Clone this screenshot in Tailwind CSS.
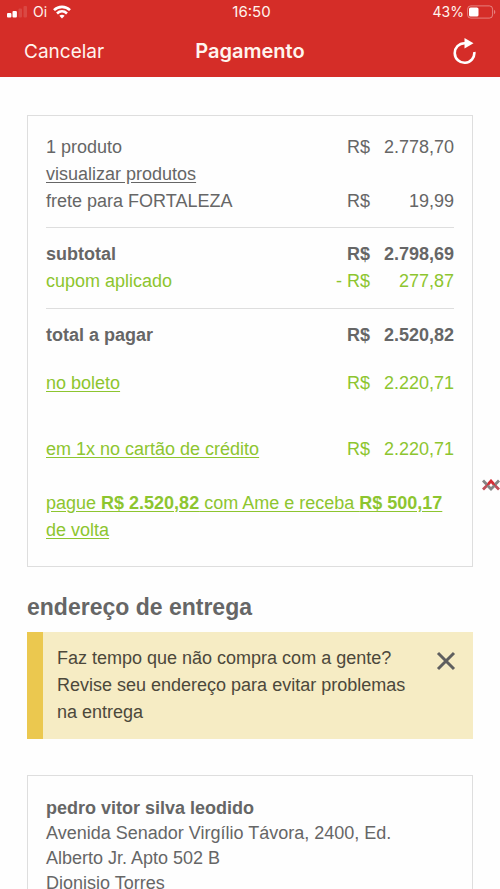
<!DOCTYPE html>
<html lang="pt-BR">
<head>
<meta charset="utf-8">
<meta name="viewport" content="width=device-width, initial-scale=1">
<title>Pagamento</title>
<script src="https://cdn.jsdelivr.net/npm/@tailwindcss/browser@4"></script>
</head>
<body class="relative bg-[#fefefe] font-['Liberation_Sans',Arial,sans-serif] text-[18px] leading-[27px] text-[#666]">

<header class="bg-[#d52d28] font-[Inter,Roboto,sans-serif] text-[#fff4ee]">
  <!-- Status bar -->
  <div class="grid h-6 grid-cols-3 items-center pr-1 pl-[7px] text-[14px] leading-6">
    <div class="flex items-center gap-[6px]">
      <svg class="h-3 w-5" viewBox="0 0 20 12" aria-hidden="true">
        <rect x="0" y="7" width="4.4" height="4.500" rx="1" fill="#fff"/>
        <rect x="5.500" y="5" width="4.400" height="6.500" rx="1" fill="#fff"/>
        <rect x="11.500" y="2.500" width="3.500" height="9" rx="1" fill="#fff" opacity=".13"/>
        <rect x="16.500" y="0" width="3.500" height="11.500" rx="1" fill="#fff" opacity=".13"/>
      </svg>
      <span>Oi</span>
      <svg class="h-[14px] w-[18px]" viewBox="0 0 18 14" fill="none" stroke="#fff" stroke-width="2.6" aria-hidden="true">
        <path d="M1 5.200C5.500.7 12.500.7 17 5.200"/>
        <path d="M4 8.500C6.900 5.700 11.100 5.700 14 8.500"/>
        <path d="M9 13.400 6.400 10.700C7.900 9.400 10.100 9.400 11.600 10.700Z" fill="#fff" stroke="none"/>
      </svg>
    </div>
    <span class="text-center text-[15px]">16:50</span>
    <div class="flex items-center justify-end gap-[3px]">
      <span>43%</span>
      <svg class="h-[14px] w-[29px]" viewBox="0 0 29 14" fill="none" aria-hidden="true">
        <rect x=".6" y=".9" width="25" height="12.200" rx="3.200" stroke="#fff" stroke-opacity=".4"/>
        <rect x="2" y="2.500" width="9.500" height="9" rx="1.600" fill="#fff"/>
        <path d="M27 4.800C28.800 5.500 28.800 8.500 27 9.200Z" fill="#fff" fill-opacity=".4"/>
      </svg>
    </div>
  </div>
  <!-- Navigation bar -->
  <nav class="grid h-[53px] grid-cols-3 items-center px-6 pt-[2px] text-[20px]">
    <button type="button" class="justify-self-start text-[19px]">Cancelar</button>
    <h1 class="text-center font-semibold">Pagamento</h1>
    <button type="button" class="justify-self-end" aria-label="Recarregar">
      <svg class="h-7 w-6" viewBox="0 0 24 28" fill="none" aria-hidden="true">
        <path d="M13.500 5.200H12.500A9.800 9.800 0 1 0 22.300 14" stroke="#fff" stroke-width="2.600"/>
        <path d="M12.500 0V10.400L21.500 5.200Z" fill="#fff"/>
      </svg>
    </button>
  </nav>
</header>

<main class="px-[27px] pt-[38px]">
  <section class="border border-[#dedede] px-[18px] pt-[18px] pb-[22px]" aria-label="Resumo do pedido">
    <table class="w-full border-separate border-spacing-0">
      <tbody>
        <tr>
          <td class="p-0">1 produto</td>
          <td class="w-10 p-0 text-right whitespace-nowrap">R$</td>
          <td class="w-[84px] p-0 text-right">2.778,70</td>
        </tr>
        <tr>
          <td class="p-0" colspan="3"><a href="#" class="underline underline-offset-2">visualizar produtos</a></td>
        </tr>
        <tr>
          <td class="border-b border-[#dedede] p-0 pb-3">frete para FORTALEZA</td>
          <td class="border-b border-[#dedede] p-0 pb-3 text-right">R$</td>
          <td class="border-b border-[#dedede] p-0 pb-3 text-right">19,99</td>
        </tr>
      </tbody>
      <tbody>
        <tr class="font-bold">
          <td class="p-0 pt-[13px]">subtotal</td>
          <td class="p-0 pt-[13px] text-right">R$</td>
          <td class="p-0 pt-[13px] text-right">2.798,69</td>
        </tr>
        <tr class="text-[#8dc52f]">
          <td class="border-b border-[#dedede] p-0 pb-[13px]">cupom aplicado</td>
          <td class="border-b border-[#dedede] p-0 pb-[13px] text-right whitespace-nowrap">- R$</td>
          <td class="border-b border-[#dedede] p-0 pb-[13px] text-right">277,87</td>
        </tr>
      </tbody>
      <tbody>
        <tr class="font-bold">
          <td class="p-0 pt-[13px]">total a pagar</td>
          <td class="p-0 pt-[13px] text-right">R$</td>
          <td class="p-0 pt-[13px] text-right">2.520,82</td>
        </tr>
        <tr class="text-[#8dc52f]">
          <td class="p-0 pt-[21px]"><a href="#" class="underline underline-offset-2">no boleto</a></td>
          <td class="p-0 pt-[21px] text-right">R$</td>
          <td class="p-0 pt-[21px] text-right">2.220,71</td>
        </tr>
        <tr class="text-[#8dc52f]">
          <td class="p-0 pt-[39px]"><a href="#" class="underline underline-offset-2">em 1x no cartão de crédito</a></td>
          <td class="p-0 pt-[39px] text-right">R$</td>
          <td class="p-0 pt-[39px] text-right">2.220,71</td>
        </tr>
      </tbody>
    </table>
    <p class="mt-[27px] text-[#8dc52f]"><a href="#" class="underline underline-offset-2">pague <b>R$ 2.520,82</b> com Ame e receba <b>R$ 500,17</b> de volta</a></p>
  </section>

  <h2 class="mt-[27px] text-[23px] font-bold">endereço de entrega</h2>

  <div class="mt-[11px] flex items-start border-l-[16px] border-[#ebc84f] bg-[#f6ecc4] py-[13px] pr-[17px] pl-[14px] text-[#4c483b]" role="status">
    <p class="flex-1">Faz tempo que não compra com a gente? Revise seu endereço para evitar problemas na entrega</p>
    <button type="button" class="mt-[6px] ml-3" aria-label="Fechar">
      <svg class="h-5 w-5" viewBox="0 0 20 20" fill="none" stroke="#5f5f5f" stroke-width="3" aria-hidden="true">
        <path d="M2 2 18 18M18 2 2 18"/>
      </svg>
    </button>
  </div>

  <section class="mt-9 border border-[#dedede] px-[18px] pt-5 pb-4" aria-label="Endereço">
    <address class="pr-8 leading-[25px] not-italic">
      <strong class="block">pedro vitor silva leodido</strong>
      Avenida Senador Virgílio Távora, 2400, Ed. Alberto Jr. Apto 502 B<br>
      Dionisio Torres
    </address>
  </section>
</main>

<!-- Side tab handle over the right edge -->
<svg class="absolute top-[479px] right-0 h-3 w-[18px]" viewBox="0 0 18 12" fill="none" stroke-width="2.800" aria-hidden="true">
  <path d="M1 10.500 5.500 6M17 10.500 12.500 6" stroke="#c0505a"/>
  <path d="M5 6.500 9 2 13 6.500" stroke="#d52d35"/>
  <path d="M1 1.500 4.800 5.500M17 1.500 13.200 5.500M5.500 6.500 9 10 12.500 6.500" stroke="#858585"/>
</svg>
</body>
</html>
